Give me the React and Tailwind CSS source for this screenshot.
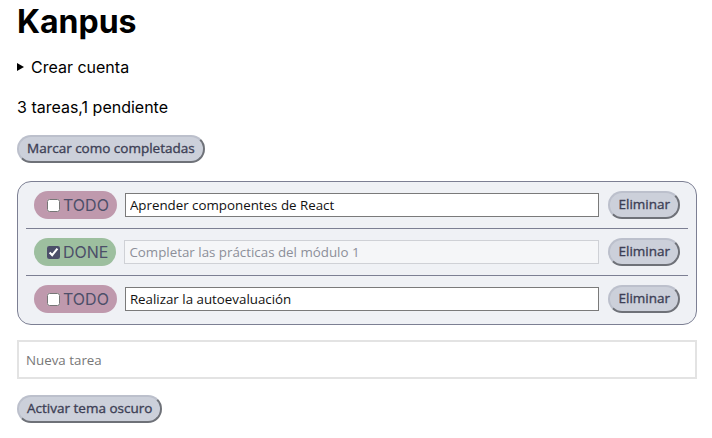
import React from "react";

const btn =
  "h-7 px-2 rounded-full bg-[#ccd0da] border-2 [border-style:outset] border-[#bcc0cc] text-[#3d3f55] text-[13.5px] font-normal [-webkit-text-stroke:0.35px_#3d3f55] leading-none font-['Open_Sans',sans-serif] flex items-center whitespace-nowrap";

function Row({ done, text, last }) {
  return (
    <li
      className={
        "flex items-center py-[9px] px-2 " +
        (last ? "" : "border-b border-[#7c7f93]")
      }
    >
      <label
        className={
          "h-7 flex items-center rounded-full pl-[9px] pr-[8px] text-[16px] text-[#4c4f69] font-['Inter',sans-serif] " +
          (done ? "bg-[#9dbf9f]" : "bg-[#bf99ad]")
        }
      >
        <input
          type="checkbox"
          defaultChecked={done}
          className="w-[13px] h-[13px] ml-1 mr-[3px] accent-[#4c4f69]"
        />
        {done ? "DONE" : "TODO"}
      </label>
      <input
        type="text"
        defaultValue={text}
        disabled={done}
        className={
          "ml-2 flex-1 h-6 px-1 text-[13.333px] font-['Open_Sans',sans-serif] border outline-none " +
          (done
            ? "bg-[#f5f6f8] border-[#cfd1d6] text-[#8c8f99]"
            : "bg-white border-[#7a7a7a] text-[#111]")
        }
      />
      <button className={btn + " ml-[9px]"}>Eliminar</button>
    </li>
  );
}

export default function App() {
  return (
    <div className="bg-white min-h-[438px] pl-[17px] pr-[15px] pt-[2px] font-['Inter',sans-serif] text-black">
      <h1 className="text-[32px] font-bold leading-[39px] m-0">Kanpus</h1>
      <details className="mt-4 text-[16px] leading-[20px]">
        <summary className="cursor-pointer list-none [&::-webkit-details-marker]:hidden flex items-center">
          <svg width="7" height="8" viewBox="0 0 7 8" className="mr-[7px]">
            <path d="M0 0 L7 4 L0 8 Z" fill="#000" />
          </svg>
          Crear cuenta
        </summary>
      </details>
      <p className="mt-5 text-[16px] leading-[20px]">3 tareas,1 pendiente</p>
      <div className="mt-[18px] flex">
        <button className={btn}>Marcar como completadas</button>
      </div>
      <ul className="mt-[18px] border border-[#7c7f93] rounded-[14px] bg-[#eff1f5] px-2 pt-0 pb-[2px]">
        <Row done={false} text="Aprender componentes de React" />
        <Row done={true} text="Completar las prácticas del módulo 1" />
        <Row done={false} text="Realizar la autoevaluación" last />
      </ul>
      <input
        type="text"
        placeholder="Nueva tarea"
        className="mt-[15px] block w-full h-[39px] border-2 border-[#e3e3e3] px-[7px] text-[13.333px] font-['Open_Sans',sans-serif] placeholder:text-[#777] outline-none"
      />
      <div className="mt-4 flex">
        <button className={btn}>Activar tema oscuro</button>
      </div>
    </div>
  );
}
